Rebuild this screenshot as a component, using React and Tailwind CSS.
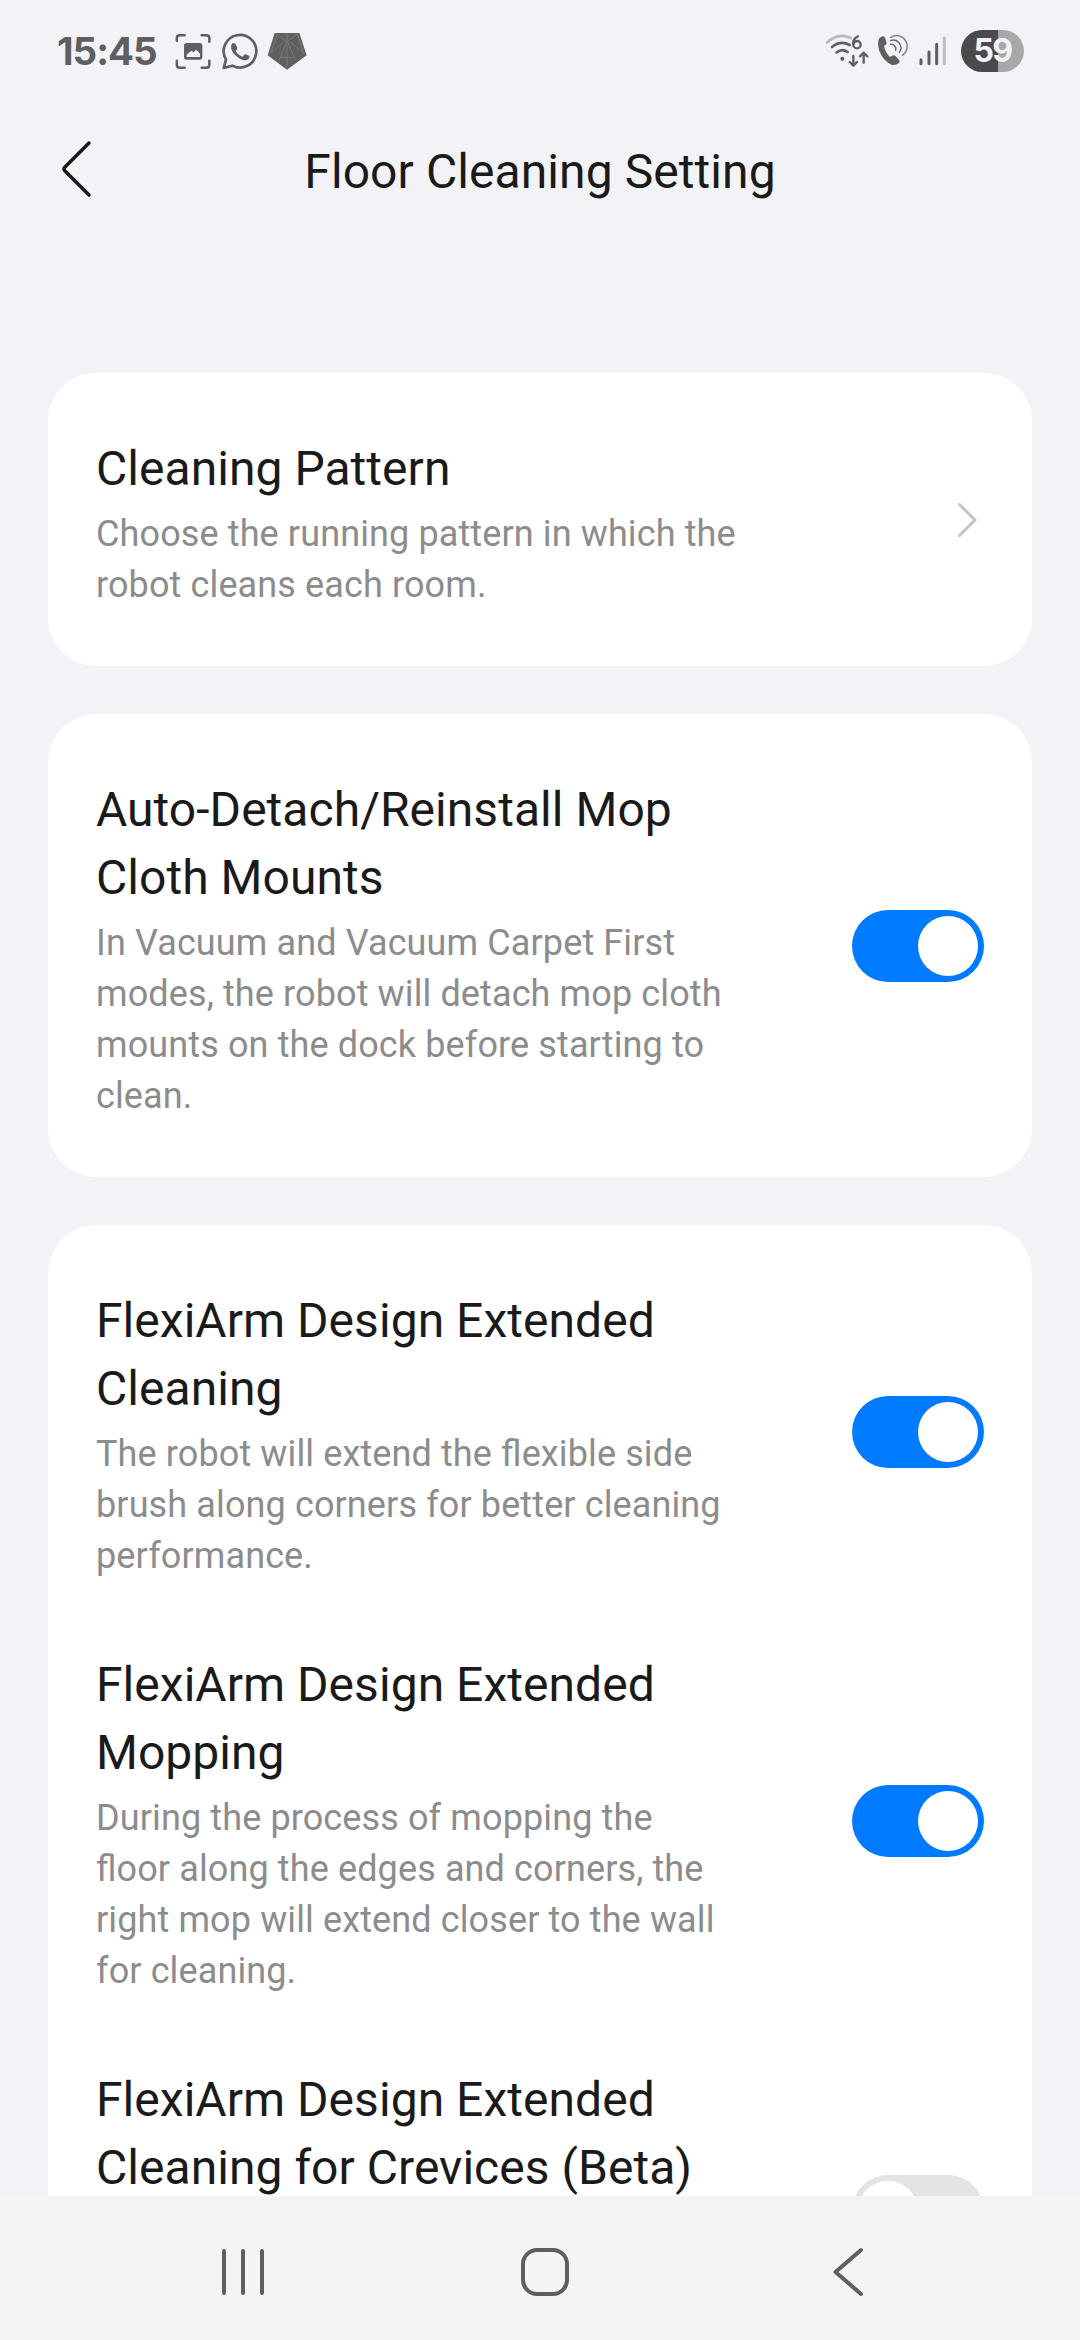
function Toggle({ on }) {
  return (
    <div className={on ? "flex h-[72px] w-[132px] shrink-0 items-center justify-end rounded-full bg-[#007aff] p-[6px]" : "flex h-[72px] w-[132px] shrink-0 items-center justify-start rounded-full bg-[#e4e4e6] p-[6px]"}>
      <div className="size-[60px] rounded-full bg-white" />
    </div>
  );
}

function Copy({ title, lines }) {
  return (
    <div className="whitespace-nowrap">
      {title.map((t) => (
        <div key={t} className="text-[48px] leading-[68px] tracking-[0.04px] text-[#1a1a1a] [font-feature-settings:'liga']">{t}</div>
      ))}
      <div className="mt-[6px]">
        {lines.map((t) => (
          <div key={t} className="text-[36px] leading-[51px] tracking-[0.12px] text-[#8c8c8e] [font-feature-settings:'liga']">{t}</div>
        ))}
      </div>
    </div>
  );
}

function Row({ title, lines, on }) {
  return (
    <div className="flex items-center justify-between pt-[24px] pb-[45px]">
      <Copy title={title} lines={lines} />
      <div className="pb-[6px]"><Toggle on={on} /></div>
    </div>
  );
}

function StatusLeft() {
  return (
    <svg className="h-[42px] w-[137px]" viewBox="400 30 411 126" fill="none">
      <g stroke="#5f5f62" strokeWidth="7.500" strokeLinecap="round">
        <path d="M411.500 62V54Q411.500 45.500 420 45.500H435M486 45.500H500Q509 45.500 509 54V65M509 122V134Q509 143 500 143H486M435 143H420Q411.500 143 411.500 134V122" />
      </g>
      <path fill="#5f5f62" fillRule="evenodd" d="M441 69H480Q488 69 488 77V111Q488 119 480 119H441Q433 119 433 111V77Q433 69 441 69ZM441 111H481V101L470 89L461 97L455 92L441 104Z" />
      <path stroke="#5f5f62" strokeWidth="8" strokeLinejoin="round" d="M552 144L559 119A49 49 0 1 1 578 137Z" />
      <path fill="#5f5f62" d="M578 70Q583 67 587 71L593 83Q594 87 588 93Q595 106 609 110L615 103Q618 101 628 107Q632 110 627 117Q619 124 607 119Q584 110 575 88Q572 77 578 70Z" />
      <path fill="#5f5f62" d="M705 39H779L801 106L742 149L684 106Z" />
      <path stroke="#87878a" strokeWidth="2" d="M742 39V149M742 66L713 42M742 66L772 42M740 66L722 112H763L744 66M713 42L693 100L732 66M772 42L792 100L752 66M722 112L718 120M763 112L767 120" />
    </svg>
  );
}

function StatusRight() {
  return (
    <svg className="h-[42px] w-[122px]" viewBox="44 30 366 126" fill="none">
      <g strokeLinecap="round" strokeWidth="8">
        <path stroke="#b9b9bc" d="M50 68Q84 36 121 54" />
        <path stroke="#5f5f62" d="M65 81Q91 60 118 75M79 97Q96 84 112 96" />
      </g>
      <circle cx="96" cy="116" r="6" fill="#5f5f62" />
      <path stroke="#5f5f62" strokeWidth="7" strokeLinecap="round" d="M143 49Q128 55 128 72" />
      <circle cx="140" cy="74" r="11" stroke="#5f5f62" strokeWidth="7" />
      <path stroke="#5f5f62" strokeWidth="7" strokeLinecap="round" strokeLinejoin="round" d="M129 108V136M118 126L129 137L140 126M160 128V99M149 109L160 98L171 109" />
      <path fill="#5f5f62" d="M207 54L217 49Q222 48 224 53L229 69Q229 73 221 78Q225 98 239 111L248 106Q252 105 256 109L267 121Q270 125 265 130Q255 137 243 134Q218 123 206 91Q200 66 207 54Z" />
      <g stroke="#6c6c6f" strokeWidth="4.500" strokeLinecap="round">
        <path d="M241 52A32 32 0 0 1 276 106" stroke="#858588" />
        <path d="M240 62A23 23 0 0 1 267 97" />
        <path d="M241 73A14 14 0 0 1 256 91" />
      </g>
      <g strokeWidth="9" strokeLinecap="round">
        <path stroke="#5f5f62" d="M332 119V131M356 96V131M379 73V131" />
        <path stroke="#bdbdc0" d="M402 53V131" />
      </g>
    </svg>
  );
}

export default function App() {
  return (
    <div className="flex h-[2340px] w-[1080px] flex-col overflow-hidden bg-[#f2f2f7] font-[Roboto,sans-serif]">
      <div className="flex h-[102px] items-center justify-between pr-[56px] pl-[57px]">
        <div className="flex items-center">
          <div className="w-[116px] font-[Inter,sans-serif] text-[38.5px] leading-[48px] font-bold tracking-[-1px] whitespace-nowrap text-[#5f5f62]">15:45</div>
          <StatusLeft />
        </div>
        <div className="flex items-center">
          <StatusRight />
          <div className="ml-[14px] flex h-[42px] w-[63px] items-center justify-center rounded-full bg-linear-to-r from-[#4a4a4c] from-59% to-[#a8a8aa] to-59% font-[Inter,sans-serif] text-[32px] font-bold tracking-[-1.5px] text-[#f2f2f7]">59</div>
        </div>
      </div>
      <header className="flex h-[271px] items-start justify-between px-[54px] pt-[36px]">
        <svg className="mt-[1px] h-[60px] w-[48px]" viewBox="54 139 48 60" fill="none" stroke="#1a1a1a" strokeWidth="3.500" strokeLinecap="round" strokeLinejoin="round">
          <path d="M89 143L65 167Q63 169 65 171L89 195" />
        </svg>
        <h1 className="text-[48px] leading-[68px] tracking-[0.08px] text-[#1a1a1a]">Floor Cleaning Setting</h1>
        <div className="w-[48px]" />
      </header>
      <main className="flex min-h-0 flex-1 flex-col gap-[48px] overflow-hidden px-[48px]">
        <section className="flex h-[293px] shrink-0 items-center justify-between rounded-[48px] bg-white px-[48px]">
          <div className="pt-[7px]">
            <Copy title={["Cleaning Pattern"]} lines={["Choose the running pattern in which the", "robot cleans each room."]} />
          </div>
          <svg className="mr-[6px] h-[36px] w-[20px]" viewBox="0 0 20 36" fill="none" stroke="#c4c4c6" strokeWidth="3" strokeLinecap="round" strokeLinejoin="round">
            <path d="M1.500 2.500L17 18L1.500 33.500" />
          </svg>
        </section>
        <section className="flex h-[463px] shrink-0 items-center justify-between rounded-[48px] bg-white px-[48px]">
          <div className="pt-[7px]">
            <Copy title={["Auto-Detach/Reinstall Mop", "Cloth Mounts"]} lines={["In Vacuum and Vacuum Carpet First", "modes, the robot will detach mop cloth", "mounts on the dock before starting to", "clean."]} />
          </div>
          <Toggle on />
        </section>
        <section className="shrink-0 rounded-[48px] bg-white px-[48px] pt-[38px]">
          <Row on title={["FlexiArm Design Extended", "Cleaning"]} lines={["The robot will extend the flexible side", "brush along corners for better cleaning", "performance."]} />
          <Row on title={["FlexiArm Design Extended", "Mopping"]} lines={["During the process of mopping the", "floor along the edges and corners, the", "right mop will extend closer to the wall", "for cleaning."]} />
          <div className="flex items-start justify-between pt-[24px]">
            <Copy title={["FlexiArm Design Extended", "Cleaning for Crevices (Beta)"]} lines={[]} />
            <div className="mt-[109px]"><Toggle /></div>
          </div>
        </section>
      </main>
      <nav className="flex h-[144px] shrink-0 items-center justify-between bg-[#f4f4f4] pt-[8px] pr-[215px] pl-[220px]">
        <svg className="h-[52px] w-[46px]" viewBox="220 2246 46 52" stroke="#5f5f5f" strokeWidth="4" strokeLinecap="round">
          <path d="M224 2251V2293M243 2251V2293M262 2251V2293" />
        </svg>
        <div className="mr-[7px] size-[48px] rounded-[16px] border-[4.500px] border-[#5f5f5f]" />
        <svg className="h-[52px] w-[34px]" viewBox="831 2246 34 52" fill="none" stroke="#5f5f5f" strokeWidth="4" strokeLinecap="round" strokeLinejoin="round">
          <path d="M861 2250L835.500 2272L861 2294" />
        </svg>
      </nav>
    </div>
  );
}
